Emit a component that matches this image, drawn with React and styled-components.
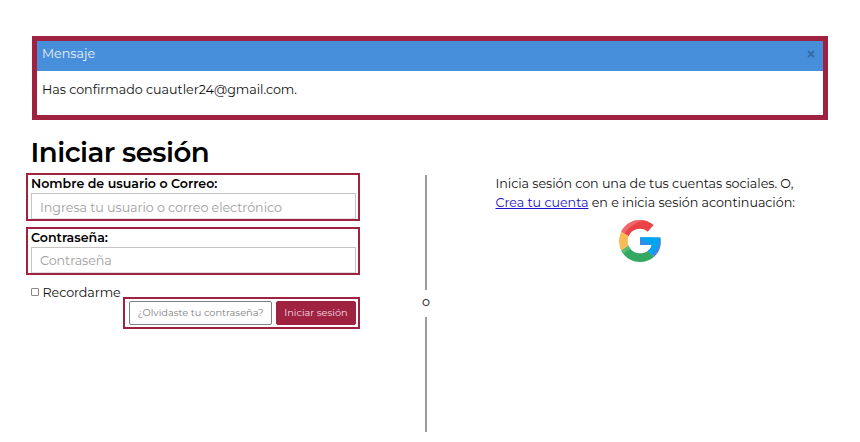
import React from "react";
import styled, { createGlobalStyle } from "styled-components";

const wine = "#9f2241";

const GlobalStyle = createGlobalStyle`
  * { box-sizing: border-box; }
  body {
    margin: 0;
    background: #fff;
    color: #111;
    font-family: Montserrat, Inter, sans-serif;
    font-size: 12.7px;
  }
`;

const Page = styled.div`
  width: 860px;
  height: 442px;
  padding: 36px 32px 0 26px;
  overflow: hidden;
`;

const Line = styled.span`
  display: block;
  white-space: nowrap;
  letter-spacing: ${(p) => p.$track || 0}px;
`;

const Message = styled.section`
  margin-left: 6px;
  height: 84px;
  border: 5px solid ${wine};
`;

const MessageHeader = styled.header`
  display: flex;
  justify-content: space-between;
  align-items: flex-start;
  height: 29.5px;
  padding: 3px 8px 0 5px;
  line-height: 20px;
  background: #478fdb;
  color: #e9f2fb;
`;

const Close = styled.svg`
  width: 8px;
  height: 8px;
  margin-top: 6px;
  stroke: #356ba6;
  stroke-width: 1.8;
`;

const MessageBody = styled.div`
  padding: 9px 5px;
  line-height: 20px;
`;

const Columns = styled.main`
  display: grid;
  grid-template-columns: 334px 132px 1fr;
`;

const Title = styled.h1`
  margin: 12px 0 1px 4.5px;
  height: 40px;
  line-height: 40px;
  font-size: 27.6px;
  font-weight: 600;
  color: #000;
`;

const Form = styled.form`
  display: flex;
  flex-direction: column;
`;

const Field = styled.label`
  display: block;
  height: 48px;
  margin-bottom: 6px;
  padding: 0 2px 0 3px;
  border: 2px solid ${wine};
`;

const FieldLabel = styled.span`
  display: block;
  height: 18px;
  line-height: 17px;
  font-size: 12.6px;
  font-weight: 600;
  color: #000;
`;

const Input = styled.input`
  display: block;
  width: 100%;
  height: 26px;
  padding: ${(p) => (p.type === "password" ? 0 : 2)}px 8px 0;
  border: 1px solid #c4c4c4;
  border-bottom-color: #ddd;
  outline: 0;
  background: #fff;
  font: inherit;
  letter-spacing: -0.06px;
  &::placeholder { color: #a0a0a0; opacity: 1; }
`;

const Remember = styled.label`
  display: flex;
  align-items: center;
  gap: 3.5px;
  height: 16px;
  margin: 3px 0 0 5px;
`;

const Checkbox = styled.input`
  appearance: none;
  width: 8px;
  height: 8px;
  margin: 0;
  border: 1px solid #888;
  border-radius: 1px;
`;

const Actions = styled.div`
  display: flex;
  align-self: flex-end;
  gap: 4px;
  width: 237px;
  height: 32px;
  margin-top: -3px;
  padding: 2px 2px 2px 4px;
  border: 2px solid ${wine};
`;

const Button = styled.button`
  display: flex;
  align-items: center;
  justify-content: center;
  width: ${(p) => (p.$primary ? 80 : 143)}px;
  height: 24px;
  padding: 0 0 1px;
  border: 1px solid ${(p) => (p.$primary ? wine : "#7d8080")};
  border-radius: 2px;
  background: ${(p) => (p.$primary ? wine : "#fff")};
  color: ${(p) => (p.$primary ? "#f3dfe5" : "#808080")};
  font: 9.8px Montserrat, Inter, sans-serif;
`;

const Divider = styled.div`
  display: grid;
  grid-template-rows: 115px 27px 115px;
  justify-items: center;
  align-items: center;
  padding-top: 2px;
`;

const Rule = styled.span`
  width: 2px;
  height: 100%;
  background: #9c9c9c;
`;

const Or = styled.span`
  padding-bottom: 3px;
  line-height: 20px;
`;

const Social = styled.aside`
  padding: 2px 0 0 3.5px;
  line-height: 18.5px;
`;

const Link = styled.a`
  color: #1b12c8;
  text-decoration: underline;
  text-decoration-thickness: 1px;
  text-underline-offset: 1px;
`;

const Google = styled.svg`
  display: block;
  width: 42px;
  height: 42px;
  margin: 8px 0 0 123.5px;
`;

function GoogleMark() {
  return (
    <Google viewBox="0 0 48 48" aria-label="Google">
      <path fill="#ea4347" d="M2.6 13.5C6.5 5.5 14.5 0 24 0c6.1 0 11.4 2.1 15.6 5.8l-6.8 7.5C30.4 11.3 27.7 10 24 10c-6 0-10.8 3.2-13 8.7z" />
      <path fill="#f0686b" d="M2.6 13.5C6.5 5.5 14.5 0 24 0c2 0 3.8.2 5.5.7C20 2 12.4 7.2 6 15.6z" />
      <path fill="#f9bb55" d="M2.6 13.5 11 18.7c-1.4 3.5-1.4 7.2 0 10.6l-8.4 5.8C-.8 28-.8 20.5 2.6 13.5z" />
      <path fill="#34a860" d="M2.6 35.1 11 29.3C13.2 34.8 18 38 24 38c3.5 0 6.5-.9 8.8-2.6l7.6 6.3C36.1 45.8 30.3 48 24 48 14.6 48 6.6 42.8 2.6 35.1z" />
      <path fill="#55ba79" d="M2.6 35.1 11 29.3c.5 1.4 1.2 2.7 2.1 3.8L4.8 38.5z" />
      <path fill="#4285e8" d="M24 20h23.5c1.3 9.2-1.2 17-7.1 21.7l-7.6-6.3c2.6-1.7 4-4 4.6-6.9H24z" />
      <path fill="#00a5f2" d="M24 20h22.5c-.4 7.7-3.2 14.1-8.4 19.8l-5.3-4.4c2.6-1.7 4-4 4.6-6.9H24z" />
      <path fill="#2f8fe6" d="M24 20v8.5h13z" />
      <path fill="#00a5f2" d="M24 20h14v8.5z" />
    </Google>
  );
}

export default function App() {
  return (
    <Page>
      <GlobalStyle />
      <Message>
        <MessageHeader>
          <Line>Mensaje</Line>
          <Close viewBox="0 0 8 8"><path d="m1 1 6 6M7 1 1 7" /></Close>
        </MessageHeader>
        <MessageBody><Line $track={-0.03}>Has confirmado cuautler24@gmail.com.</Line></MessageBody>
      </Message>
      <Title><Line $track={-0.5}>Iniciar sesión</Line></Title>
      <Columns>
        <Form>
          <Field>
            <FieldLabel>Nombre de usuario o Correo:</FieldLabel>
            <Input placeholder="Ingresa tu usuario o correo electrónico" />
          </Field>
          <Field>
            <FieldLabel>Contraseña:</FieldLabel>
            <Input type="password" placeholder="Contraseña" />
          </Field>
          <Remember><Checkbox type="checkbox" /><Line $track={-0.08}>Recordarme</Line></Remember>
          <Actions>
            <Button type="button"><Line>¿Olvidaste tu contraseña?</Line></Button>
            <Button type="button" $primary><Line>Iniciar sesión</Line></Button>
          </Actions>
        </Form>
        <Divider><Rule /><Or>o</Or><Rule /></Divider>
        <Social>
          <Line $track={-0.05}>Inicia sesión con una de tus cuentas sociales. O,</Line>
          <Line $track={-0.04}><Link href="#">Crea tu cuenta</Link> en e inicia sesión acontinuación:</Line>
          <GoogleMark />
        </Social>
      </Columns>
    </Page>
  );
}
